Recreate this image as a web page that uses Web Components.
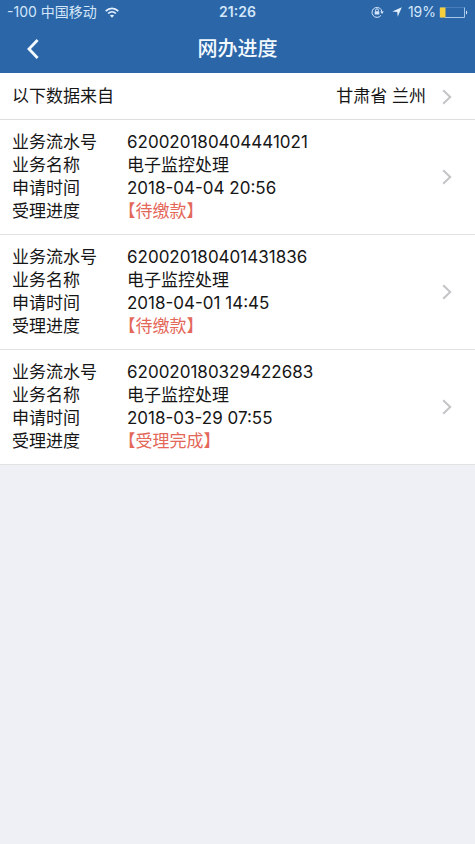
<!DOCTYPE html>
<html lang="zh-CN">
<head>
<meta charset="utf-8">
<meta name="viewport" content="width=device-width, initial-scale=1">
<title>网办进度</title>
<style>
  html { background: #efeff6; }
  body { margin: 0; font-family: Inter, "Noto Sans CJK SC", sans-serif; font-size: 17px; line-height: 23px; color: #161616; }
</style>
</head>
<body>
<progress-app></progress-app>
<script>
class BaseElement extends HTMLElement {
  constructor() {
    super();
    this.attachShadow({ mode: "open" }).innerHTML = this.constructor.markup;
  }
}

class ChevronIcon extends BaseElement {
  static markup = `
    <style>:host { display: block; flex: none; } svg { display: block; }</style>
    <svg width="10" height="16" viewBox="0 0 10 16" fill="none" stroke="#c4c4c8" stroke-width="2" aria-hidden="true"><path d="M1.2 1.3 8.2 8 1.2 14.7"/></svg>`;
}
customElements.define("chevron-icon", ChevronIcon);

class StatusBar extends BaseElement {
  static markup = `
    <style>
      :host { display: grid; grid-template-columns: 1fr auto 1fr; align-items: center; height: 24px; padding: 0 7px; font-size: 14px; line-height: 24px; color: #d3e6fa; }
      .side { display: flex; align-items: center; }
      .carrier { gap: 8px; }
      .right { justify-content: flex-end; }
      .time { font-weight: 600; }
      .lock { margin-right: 8px; }
      .arrow { margin-right: 6px; }
      .battery { margin-left: 3px; }
      svg { display: block; flex: none; }
    </style>
    <div class="side carrier"><span>-100 中国移动</span>
      <svg width="14" height="11" viewBox="0 0 14 11" fill="none" stroke="#e2f0ff" stroke-width="1.7" aria-hidden="true"><path d="M.7 4.1C4.4.4 9.6.4 13.3 4.1M3.1 6.5c2.3-2.2 5.5-2.2 7.8 0"/><path d="M7 10.8 4.9 8.6c1.2-1.1 3-1.1 4.2 0z" fill="#e2f0ff" stroke="none"/></svg>
    </div>
    <span class="time">21:26</span>
    <div class="side right">
      <svg class="lock" width="13" height="12" viewBox="0 0 13 12" fill="none" stroke="#d3e6fa" aria-hidden="true"><path d="M10 9.4A5 5 0 1 1 11 6"/><path d="M9.2 5.6h3.6L11 8z" fill="#d3e6fa" stroke="none"/><path d="M4.6 5.4V4.2a1.4 1.4 0 0 1 2.8 0v1.2"/><rect x="3.7" y="5.2" width="4.6" height="3.4" rx=".4" fill="#d3e6fa" stroke="none"/></svg>
      <svg class="arrow" width="10" height="10" viewBox="0 0 10 10" fill="#e2f0ff" aria-hidden="true"><path d="M9.8.3 5.7 9.8 5.3 5 .3 4.6z"/></svg>
      <span>19%</span>
      <svg class="battery" width="29" height="11" viewBox="0 0 29 11" aria-hidden="true"><rect x=".5" y=".5" width="25" height="10" rx="1" fill="none" stroke="#8fb5dd" stroke-opacity=".3"/><path d="M6 10.5h19.5V.5" fill="none" stroke="#a5c7e8"/><path d="M1 .5h5.5v10H1z" fill="#f6cf3c"/><path d="M27 3.5c1.7.7 1.7 3.3 0 4z" fill="#d3e6fa"/></svg>
    </div>`;
}
customElements.define("status-bar", StatusBar);

class NavBar extends BaseElement {
  static markup = `
    <style>
      :host { display: grid; grid-template-columns: 66px 1fr 66px; align-items: center; height: 49px; color: #f2f9ff; }
      button { display: flex; align-items: center; justify-content: center; height: 44px; padding: 0; border: 0; background: none; color: inherit; }
      h1 { margin: 0; text-align: center; font-size: 20px; line-height: 28px; font-weight: 500; }
    </style>
    <button type="button" aria-label="返回"><svg width="12" height="20" viewBox="0 0 12 20" fill="none" stroke="currentColor" stroke-width="2.8" aria-hidden="true"><path d="M10.6 1 2 10l8.6 9"/></svg></button>
    <h1><slot></slot></h1>`;
}
customElements.define("nav-bar", NavBar);

class SourceRow extends BaseElement {
  static markup = `
    <style>
      :host { display: block; background: #fff; border-bottom: 1px solid #dedede; }
      button { display: flex; align-items: center; width: 100%; box-sizing: border-box; padding: 12px 23px 11px 12px; border: 0; background: none; font: inherit; color: inherit; text-align: left; }
      .label { flex: 1; }
      chevron-icon { margin-left: 16px; }
    </style>
    <button type="button"><span class="label"><slot name="label"></slot></span><span><slot></slot></span><chevron-icon></chevron-icon></button>`;
}
customElements.define("source-row", SourceRow);

class RecordRow extends BaseElement {
  static markup = `
    <style>
      :host { display: flex; align-items: center; padding: 11px 23px 11px 12px; background: #fff; border-bottom: 1px solid #e2e2e2; }
      dl { flex: 1; display: grid; grid-template-columns: 115px 1fr; margin: 0; }
      dd { margin: 0; }
      .state { color: #e4685a; }
    </style>
    <dl>
      <dt>业务流水号</dt><dd><slot name="number"></slot></dd>
      <dt>业务名称</dt><dd><slot name="name"></slot></dd>
      <dt>申请时间</dt><dd><slot name="time"></slot></dd>
      <dt>受理进度</dt><dd class="state"><slot name="state"></slot></dd>
    </dl>
    <chevron-icon></chevron-icon>`;
}
customElements.define("record-row", RecordRow);

class ProgressApp extends BaseElement {
  static markup = `
    <style>
      :host { display: block; }
      header { background: #2b66a8; }
      span[slot="state"] { font-feature-settings: "halt"; }
    </style>
    <header><status-bar></status-bar><nav-bar>网办进度</nav-bar></header>
    <main>
      <source-row><span slot="label">以下数据来自</span>甘肃省 兰州</source-row>
      <record-row><span slot="number">620020180404441021</span><span slot="name">电子监控处理</span><span slot="time">2018-04-04 20:56</span><span slot="state">【待缴款】</span></record-row>
      <record-row><span slot="number">620020180401431836</span><span slot="name">电子监控处理</span><span slot="time">2018-04-01 14:45</span><span slot="state">【待缴款】</span></record-row>
      <record-row><span slot="number">620020180329422683</span><span slot="name">电子监控处理</span><span slot="time">2018-03-29 07:55</span><span slot="state">【受理完成】</span></record-row>
    </main>`;
}
customElements.define("progress-app", ProgressApp);
</script>
</body>
</html>
